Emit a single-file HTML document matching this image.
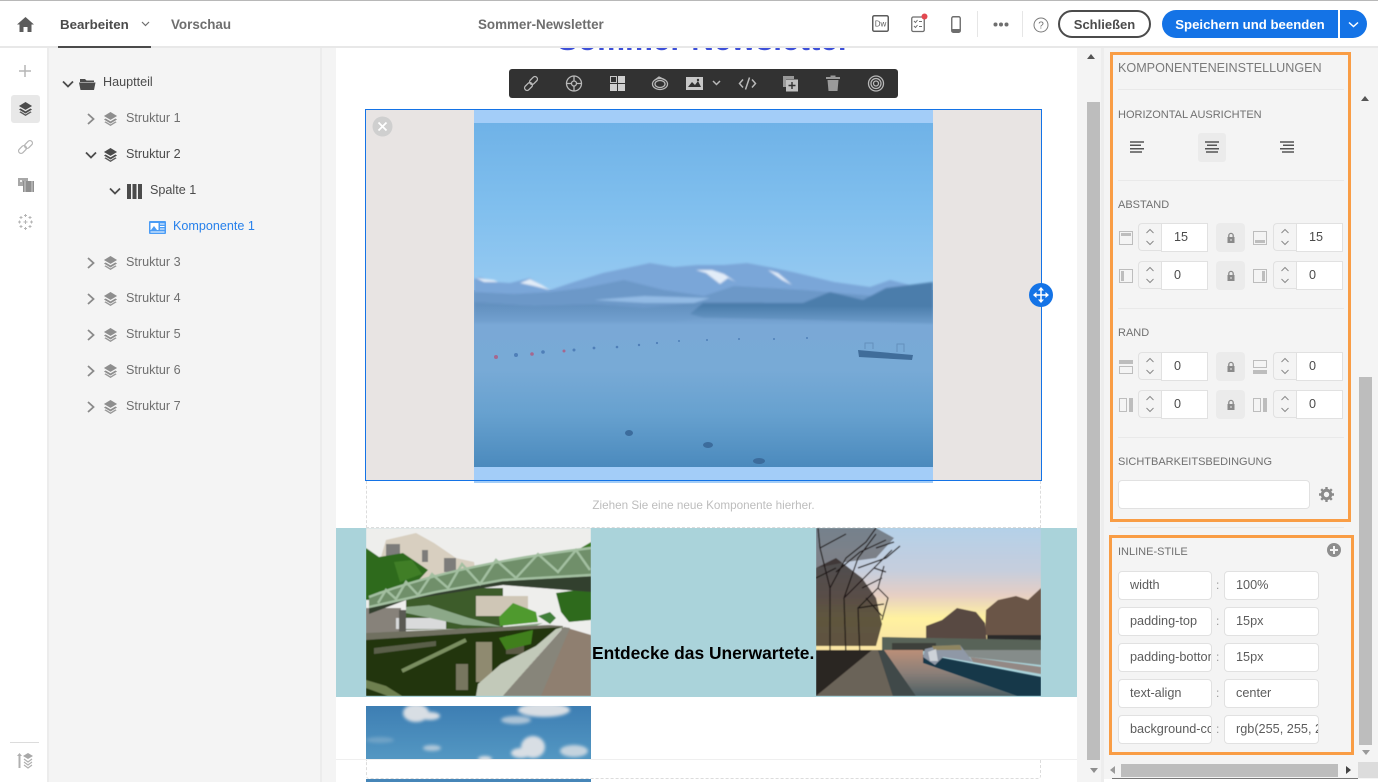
<!DOCTYPE html>
<html lang="de"><head><meta charset="utf-8"><title>Sommer-Newsletter</title>
<style>
*{box-sizing:border-box}
html,body{margin:0;padding:0}
body{width:1378px;height:782px;position:relative;overflow:hidden;background:#f4f4f4;font-family:"Liberation Sans",Arial,sans-serif;color:#6e6e6e}
.a{position:absolute}
.t{position:absolute;white-space:nowrap;line-height:16px}
svg{position:absolute;display:block;overflow:hidden}
.tree{font-size:12.6px;color:#707070}
.lbl{font-size:11px;color:#707070;position:absolute;left:1118px;white-space:nowrap;line-height:14px}
.hr{position:absolute;left:1118px;width:226px;height:1px;background:#e9e9e9}
.step{position:absolute;width:24px;height:28px;border:1px solid #e1e1e1;border-right:0;border-radius:4px 0 0 4px;background:#f4f4f4}
.num{position:absolute;width:47px;height:29px;border:1px solid #e1e1e1;background:#fff;font-size:12.6px;color:#4b4b4b;line-height:27px}
.lock{position:absolute;width:29px;height:29px;border-radius:4px;background:#ebebeb}
.box{position:absolute;height:29px;background:#fff;border:1px solid #e1e1e1;border-radius:4px;font-size:12.7px;color:#5c5c5c;line-height:26px;overflow:hidden;white-space:nowrap}
.colon{position:absolute;left:1216px;font-size:12px;color:#999;line-height:16px}
</style></head><body>
<svg width="0" height="0" style="position:absolute">
<defs>
<symbol id="layers" viewBox="0 0 16 16"><path d="M8 1 15 5.300 8 9.500 1 5.300Z"/><path d="M2.800 8 1 9.100 8 13.300 15 9.100 13.200 8 8 11.100Z"/><path d="M2.800 11 1.500 12 8 16 14.500 12 13.200 11 8 14.200Z" opacity=".9"/></symbol>
<symbol id="cr" viewBox="0 0 10 14"><path d="M2 2 7.500 7 2 12" fill="none" stroke="currentColor" stroke-width="1.800"/></symbol>
<symbol id="cd" viewBox="0 0 14 10"><path d="M2 2.500 7 7.500 12 2.500" fill="none" stroke="currentColor" stroke-width="1.800"/></symbol>
<symbol id="up" viewBox="0 0 10 6"><path d="M1.500 5 5 1.500 8.500 5" fill="none" stroke="#8a8a8a" stroke-width="1"/></symbol>
<symbol id="dn" viewBox="0 0 10 6"><path d="M1.500 1 5 4.500 8.500 1" fill="none" stroke="#8a8a8a" stroke-width="1"/></symbol>
<symbol id="lk" viewBox="0 0 10 12"><path d="M2.800 5V3.600a2.200 2.200 0 0 1 4.400 0V5" fill="none" stroke="#8a8a8a" stroke-width="1.300"/><rect x="1.500" y="5" width="7" height="6" fill="#8a8a8a"/><rect x="4.500" y="7" width="1" height="2" fill="#ebebeb"/></symbol>
</defs></svg>

<!-- canvas -->
<div class="a" style="left:336px;top:48px;width:741px;height:734px;background:#fff;overflow:hidden"></div>
<div class="t" style="left:336px;width:735px;text-align:center;top:20px;height:32px;line-height:40px;overflow:hidden;font-size:31.4px;font-weight:bold;color:#3d4fd8;">Sommer Newsletter</div>

<!-- Selected image component -->
<div class="a" style="left:366px;top:110px;width:675px;height:370px;background:#e8e4e3"></div>
<svg style="left:474px;top:110px" width="459" height="373" viewBox="0 0 459 373">
<defs>
<linearGradient id="sky2" x1="0" y1="0" x2="0" y2="1"><stop offset="0" stop-color="#6fb2e7"/><stop offset=".5" stop-color="#80bfee"/><stop offset="1" stop-color="#97caf1"/></linearGradient>
<linearGradient id="wat" x1="0" y1="0" x2="0" y2="1"><stop offset="0" stop-color="#7aa8d6"/><stop offset=".45" stop-color="#78aad6"/><stop offset=".7" stop-color="#67a1cf"/><stop offset="1" stop-color="#4b8abd"/></linearGradient>
<linearGradient id="haze" x1="0" y1="0" x2="0" y2="1"><stop offset="0" stop-color="#7aa8d6" stop-opacity="0"/><stop offset=".7" stop-color="#7aa8d6"/><stop offset="1" stop-color="#7aa8d6"/></linearGradient>
<filter id="sf"><feGaussianBlur stdDeviation="1"/></filter>
</defs>
<rect width="459" height="373" fill="#a3cdf8"/>
<rect y="13" width="459" height="170" fill="url(#sky2)"/>
<rect y="180" width="459" height="177" fill="url(#wat)"/>
<g filter="url(#sf)">
<path d="M0 169 6 167 20 172 36 173 56 168 76 180 100 172 129 163 176 153 200 157 223 155 250 155 273 153 300 158 323 163 360 172 396 177 416 170 436 175 459 172V214H0Z" fill="#7aa6d8"/>
<path d="M2 168 20 170 24 172 10 172ZM46 173 56 169 68 175 76 180 60 176ZM222 160 232 163 246 174 254 168 262 172 250 164 238 160ZM294 160 308 170 318 175 304 163Z" fill="#e2ecf8"/>
<path d="M0 182 40 184 76 182 110 178 150 170 190 180 230 186 260 176 330 180 400 186 459 180V214H0Z" fill="#6c98c8"/>
<path d="M0 192 60 196 120 194 170 198 230 192 290 192 270 204 200 212 0 212Z" fill="#6491c0"/>
<path d="M120 190 170 186 236 188 220 193 170 193Z" fill="#92bae4"/>
<path d="M216 204 229 193 329 193 356 182 389 190 412 178 459 172V214L400 212 330 210 230 208Z" fill="#4c7dab"/>
</g>
<rect y="196" width="459" height="34" fill="url(#haze)"/>
<g fill="#4f7fb8">
<circle cx="22" cy="247" r="2" fill="#a5688f"/><circle cx="42" cy="245" r="2"/><circle cx="58" cy="244" r="1.800" fill="#a5688f"/><circle cx="69" cy="242" r="1.800"/><circle cx="90" cy="241" r="1.500" fill="#a5688f"/><circle cx="100" cy="240" r="1.500"/><circle cx="120" cy="238" r="1.400"/><circle cx="143" cy="237" r="1.300"/><circle cx="165" cy="235" r="1.200"/><circle cx="183" cy="233" r="1.100"/><circle cx="205" cy="231" r="1"/><circle cx="233" cy="230" r="1"/><circle cx="265" cy="229" r="1"/><circle cx="300" cy="229" r="1"/><circle cx="333" cy="228" r="1"/>
</g>
<path d="M384 240 439 245 438 250 385 247Z" fill="#406d9a"/><path d="M391 239V233H399V239M423 242V234H430V242" fill="none" stroke="#6490bc" stroke-width="1"/>
<g fill="#3c6c9c"><ellipse cx="155" cy="323" rx="4" ry="3"/><ellipse cx="234" cy="335" rx="5" ry="3"/><ellipse cx="285" cy="351" rx="6" ry="3"/></g>
<rect y="0" width="459" height="13" fill="#a3cdf8"/><rect y="357" width="459" height="16" fill="#a3cdf8"/>
</svg>
<div class="a" style="left:365px;top:109px;width:677px;height:372px;border:1px solid #1473e6"></div>
<svg style="left:372px;top:116px" width="21" height="21" viewBox="0 0 21 21"><circle cx="10.500" cy="10.500" r="10" fill="#cfcfcf"/><path d="M6.500 6.500 14.500 14.500M14.500 6.500 6.500 14.500" stroke="#fff" stroke-width="1.800"/></svg>
<svg style="left:1029px;top:283px" width="24" height="24" viewBox="0 0 24 24"><circle cx="12" cy="12" r="12" fill="#1473e6"/><path d="M12 5V19M5 12H19" stroke="#fff" stroke-width="1.500"/><path d="M12 4 15 7.500H9ZM12 20 15 16.500H9ZM4 12 7.500 9V15ZM20 12 16.500 9V15Z" fill="#fff"/></svg>

<!-- toolbar -->
<div class="a" style="left:509px;top:69px;width:389px;height:29px;background:#323232;border-radius:3px"></div>
<svg style="left:509px;top:69px" width="389" height="29" viewBox="0 0 389 29" fill="none" stroke="#b9b9b9" stroke-width="1.300">
<rect x="15" y="15" width="9" height="5" rx="2.500" transform="rotate(-45 19.500 17.500)"/><rect x="20" y="9" width="9" height="5" rx="2.500" transform="rotate(-45 24.500 11.500)"/>
<circle cx="65" cy="14.500" r="7.500"/><circle cx="65" cy="14.500" r="2.500"/><path d="M57.500 14.500H62.500M67.500 14.500H72.500M65 7V12M65 17V22"/>
<g stroke="none"><rect x="101.500" y="7.500" width="6" height="6" fill="none" stroke="#c8c8c8" stroke-width="1"/><rect x="109" y="7" width="7" height="7" fill="#d0d0d0"/><rect x="101" y="15" width="7" height="7" fill="#d0d0d0"/><rect x="109" y="15" width="7" height="7" fill="#d0d0d0"/></g>
<ellipse cx="151" cy="15" rx="7.500" ry="5.500"/><ellipse cx="151" cy="15" rx="5" ry="3.500"/><path d="M146 11 150 8 156 11"/>
<g stroke="none"><rect x="177" y="8" width="17" height="13" fill="#c8c8c8"/><path d="M179 18 183 13 186 16 189 12 192 18Z" fill="#323232"/><circle cx="189" cy="11" r="1.200" fill="#323232"/></g>
<path d="M204 12 207.500 15.500 211 12" stroke-width="1.500"/>
<path d="M234 10.500 230.500 14.500 234 18.500M243 10.500 246.500 14.500 243 18.500M240.500 8.500 236.500 20.500" stroke-width="1.500"/>
<g stroke="none"><path d="M274 7H285V10H277V18H274Z" fill="#999"/><rect x="277" y="10.500" width="12" height="12" fill="#c0c0c0"/></g><path d="M283 13V20M279.500 16.500H286.500" stroke="#323232" stroke-width="1.400"/>
<g stroke="none"><path d="M317 8H331V10H317ZM321.500 6.500H326.500V8H321.500ZM318.500 11H329.500L328.500 22H319.500Z" fill="#9a9a9a"/></g>
<circle cx="367" cy="14.500" r="7.500"/><circle cx="367" cy="14.500" r="5"/><circle cx="367" cy="14.500" r="2.500"/>
</svg>

<!-- drop zone -->
<div class="a" style="left:366px;top:481px;width:675px;height:47px;border:1px dashed #dcdcdc;border-top:0"></div>
<div class="t" style="left:366px;width:675px;top:498px;text-align:center;font-size:11.7px;color:#bdbdbd">Ziehen Sie eine neue Komponente hierher.</div>

<!-- teal row -->
<div class="a" style="left:336px;top:528px;width:741px;height:169px;background:#aad3da"></div>
<div class="t" style="left:592px;top:643px;font-size:17.4px;font-weight:bold;color:#000;line-height:20px">Entdecke das Unerwartete.</div>

<!-- Bridge photo -->
<svg style="left:366px;top:528px" width="225" height="168" viewBox="0 0 225 168">
<defs><filter id="b1"><feGaussianBlur stdDeviation=".6"/></filter></defs>
<g filter="url(#b1)">
<rect width="225" height="168" fill="#eeeeec"/>
<path d="M15 29 20 12 50 5 68 15 90 30 108 34 112 60 60 70 15 72Z" fill="#d8cfc0"/>
<path d="M20 16H34V34H20ZM78 30H90V44H78ZM56 22H62V34H56Z" fill="#7d7b7a"/>
<path d="M0 20 13 29 37 25 62 42 50 55 13 64 3 72H0Z" fill="#2f6b1e"/>
<path d="M28 34 46 32 56 46 34 54Z" fill="#3f7e26"/>
<path d="M40 72 110 60 137 60 137 100 40 102Z" fill="#3e5c2c"/>
<rect x="110" y="68" width="52" height="20" fill="#cfc6b6"/>
<path d="M190 65 225 60V92L203 94 195 84Z" fill="#2e6a1d"/>
<path d="M198 30 225 14V36L205 40Z" fill="#3c7a28"/>
<path d="M133 89 147 75 170 84 172 94 134 98Z" fill="#4f9a2f"/>
<path d="M172 88 184 84 190 90 184 96Z" fill="#3f7f38"/>
<rect x="0" y="80" width="35" height="26" fill="#87827a"/>
<rect x="30" y="90" width="50" height="11" fill="#d9dadb"/>
<path d="M40 79 63 77 103 90 137 99 177 95 165 100 97 97 40 85Z" fill="#8ca888"/>
<rect x="33" y="82" width="7" height="24" fill="#5a5a52"/>
<path d="M0 105 183 97 197 98 197 101 0 114Z" fill="#6f6f60"/>
<path d="M0 112 197 99 137 168H0Z" fill="#23360b"/>
<path d="M8 120 70 113 70 118 8 126Z" fill="#5a5f48"/>
<rect x="110" y="114" width="16" height="40" fill="#8f8a70"/>
<rect x="90" y="136" width="12" height="26" fill="#77765e"/>
<rect x="140" y="108" width="18" height="18" fill="#5b5a45"/>
<path d="M133 110 167 102 165 116 140 122Z" fill="#3f7f1a"/>
<path d="M36 143 100 112" stroke="#7a8e60" stroke-width="4" fill="none"/>
<path d="M0 152 20 158 36 168H22L0 160Z" fill="#6e8050"/>
<path d="M110 168 112 156 135 136 170 118 190 101 197 99 137 168Z" fill="#c2c9b9"/>
<path d="M137 168 198 99 225 107V168Z" fill="#8f7f70"/>
<path d="M137 168 198 99 204 100 175 168Z" fill="#87857a"/>
<path d="M3 79 70 64 137 52 225 47V64L137 57 40 72 3 86Z" fill="#33402e"/>
<path d="M3 69Q90 36 225 20V47L137 52 70 64 3 79Z" fill="#6f8f6a"/>
<g stroke="#a3bfa0" stroke-width="2.400" fill="none"><path d="M12 75 20 62 30 71 40 54 52 67 66 46 82 60 96 36 114 56 130 32 150 50 172 26 192 44 210 22 224 42"/><path d="M3 69Q90 36 225 20"/><path d="M3 79 70 64 137 52 225 47"/></g>
</g>
</svg>

<!-- Sunset photo -->
<svg style="left:816px;top:528px" width="225" height="168" viewBox="0 0 225 168">
<defs><linearGradient id="ss" x1="0" y1="0" x2="0" y2="1"><stop offset="0" stop-color="#b4d0e8"/><stop offset=".35" stop-color="#c6cedd"/><stop offset=".55" stop-color="#e6cfc4"/><stop offset=".74" stop-color="#fff2a0"/><stop offset=".9" stop-color="#fbe6a4"/></linearGradient>
<linearGradient id="sw" x1="0" y1="0" x2="0" y2="1"><stop offset="0" stop-color="#bb8f78"/><stop offset=".5" stop-color="#8b7f78"/><stop offset="1" stop-color="#4d5f63"/></linearGradient>
<filter id="b2"><feGaussianBlur stdDeviation=".5"/></filter></defs>
<g filter="url(#b2)">
<rect width="225" height="122" fill="url(#ss)"/>
<path d="M169 107 170 82 182 72 200 68 212 72 225 60V110Z" fill="#6b5447"/>
<path d="M126 92 141 80 160 84 169 95 171 116H110V98Z" fill="#584a42"/>
<rect x="171" y="107" width="54" height="13" fill="#2a2a2c"/>
<path d="M0 40 20 30 46 50 60 70 66 96 60 118H0Z" fill="#2a211d" opacity=".75"/>
<path d="M0 0H60L78 10 60 30 30 34 0 40Z" fill="#2a211d" opacity=".45"/>
<g stroke="#1d1613" stroke-width="1.200" fill="none"><path d="M14 130 14 60 4 20 2 0M30 130 28 70 42 30 60 6M14 60 30 30 50 14 60 0M28 70 58 40 76 22M44 130 42 80 62 60 68 38M42 80 68 76M60 20 78 14M42 40 70 30 84 18M4 20 30 6M20 44 44 24 70 12M46 60 66 50M58 40 70 44M0 50 20 40M62 60 72 70 66 92M50 70 66 88"/></g>
<path d="M66 109 225 112V122H66Z" fill="#596459"/>
<rect x="76" y="115" width="44" height="8" fill="#3c3f3a"/>
<path d="M0 122H62L66 122 100 168H0Z" fill="#2c2622"/>
<path d="M66 122 107 122 107 135 201 168H100Z" fill="url(#sw)"/>
<path d="M107 122H225V137L154 129Z" fill="#7c7a76" opacity=".8"/>
<path d="M0 168 56 122 62 122 77 168Z" fill="#6b6358"/>
<path d="M62 122 68 122 100 168H77Z" fill="#40494a"/>
<path d="M107 127 127 130 225 149V168H201L107 135Z" fill="#15374a"/>
<path d="M154 129 225 139V146L157 134Z" fill="#938884"/>
<path d="M109 121 122 118 144 117 157 134 127 129 119 137 107 129Z" fill="#8f98a6"/>
<path d="M116 118 144 117 146 122 118 122Z" fill="#8f8560"/>
<path d="M112 124 120 121 122 133 114 133Z" fill="#cdd2d8"/>
</g>
</svg>

<!-- Sky photo -->
<svg style="left:366px;top:706px" width="225" height="76" viewBox="0 0 225 76">
<defs><linearGradient id="bs" x1="0" y1="0" x2="0" y2="1"><stop offset="0" stop-color="#3d7eb3"/><stop offset="1" stop-color="#5da2c9"/></linearGradient><filter id="bl"><feGaussianBlur stdDeviation="1.500"/></filter></defs>
<rect width="225" height="76" fill="url(#bs)"/>
<g fill="#d8dee4" filter="url(#bl)"><ellipse cx="50" cy="7" rx="13" ry="9"/><ellipse cx="64" cy="10" rx="10" ry="4"/><ellipse cx="178" cy="4" rx="26" ry="7"/><ellipse cx="150" cy="14" rx="15" ry="4" opacity=".7"/><ellipse cx="167" cy="41" rx="12" ry="11"/><ellipse cx="155" cy="47" rx="10" ry="5"/><ellipse cx="208" cy="45" rx="14" ry="6" opacity=".85"/><ellipse cx="66" cy="42" rx="9" ry="3" opacity=".7"/><ellipse cx="119" cy="53" rx="7" ry="3"/><ellipse cx="14" cy="34" rx="14" ry="3" opacity=".25"/></g>
</svg>
<div class="a" style="left:336px;top:759px;width:741px;height:23px;background:#fff;border-top:1px solid #efefef"></div>
<div class="a" style="left:366px;top:760px;width:675px;height:19px;border:1px dashed #dcdcdc;border-top:0;border-radius:0 0 3px 3px"></div>
<div class="a" style="left:366px;top:779px;width:225px;height:3px;background:#4686b8"></div>

<!-- canvas scrollbar -->
<div class="a" style="left:1077px;top:48px;width:27px;height:734px;background:#f4f4f4"></div>
<div class="a" style="left:1101px;top:48px;width:3px;height:734px;background:#ededed"></div>
<div class="a" style="left:1087px;top:102px;width:13px;height:658px;background:#bdbdbd"></div>
<svg style="left:1087px;top:54px" width="8" height="5"><path d="M0 5 4 0 8 5Z" fill="#555"/></svg>
<svg style="left:1090px;top:768px" width="8" height="5"><path d="M0 0H8L4 5Z" fill="#8e8e8e"/></svg>

<!-- left tree panel -->
<div class="a" style="left:0;top:48px;width:47px;height:734px;background:#fff"></div>
<div class="a" style="left:47px;top:48px;width:2px;height:734px;background:#ececec"></div>
<div class="a" style="left:320px;top:48px;width:2px;height:734px;background:#ececec"></div>

<div class="a" style="left:11px;top:95px;width:29px;height:28px;background:#e8e8e8;border-radius:3px"></div>
<svg style="left:18px;top:64px" width="14" height="14" viewBox="0 0 14 14"><path d="M7 1V13M1 7H13" stroke="#b5b5b5" stroke-width="1.500"/></svg>
<svg style="left:18px;top:101px;color:#4b4b4b" width="15" height="15" fill="#4b4b4b"><use href="#layers"/></svg>
<svg style="left:17px;top:139px" width="17" height="16" viewBox="0 0 17 16" fill="none" stroke="#b5b5b5" stroke-width="1.200"><rect x="1" y="8" width="9" height="5" rx="2.500" transform="rotate(-45 5.500 10.500)"/><rect x="7" y="3" width="9" height="5" rx="2.500" transform="rotate(-45 11.500 5.500)"/></svg>
<svg style="left:18px;top:177px" width="16" height="16" viewBox="0 0 16 16"><rect x="0" y="1" width="10" height="8" fill="#a8a8a8"/><rect x="5" y="4" width="11" height="11" fill="#8f8f8f"/><path d="M7 4V15M14 4V15" stroke="#d0d0d0"/><rect x="2" y="3" width="2" height="2" fill="#eee"/></svg>
<svg style="left:17px;top:214px" width="17" height="16" viewBox="0 0 17 16" fill="none" stroke="#b5b5b5" stroke-width="1"><path d="M8.500 0V3M7 1.500H10M8.500 6V10M6.500 8H10.500M8.500 13V16M7 14.500H10M1 8H4M2.500 6.500V9.500M13 8H16M14.500 6.500V9.500M4 2V5M2.500 3.500H5.500M13 2V5M11.500 3.500H14.500M4 11V14M2.500 12.500H5.500M13 11V14M11.500 12.500H14.500"/></svg>
<div class="a" style="left:10px;top:742px;width:29px;height:1px;background:#dcdcdc"></div>
<svg style="left:17px;top:753px" width="17" height="16" viewBox="0 0 17 16"><path d="M2.500 2V15" stroke="#b0b0b0" stroke-width="2"/><path d="M0 3 2.500 0 5 3Z" fill="#b0b0b0"/><path d="M11 0 16 3 11 6 6 3Z" fill="#a8a8a8"/><path d="M7 6 11 9 15 6M7 9 11 12 15 9M7 12 11 15 15 12" stroke="#b0b0b0" fill="none" stroke-width="1.200"/></svg>

<!-- tree -->
<svg style="left:61px;top:79px;color:#4b4b4b" width="14" height="10"><use href="#cd"/></svg>
<svg style="left:79px;top:77px" width="17" height="13" viewBox="0 0 17 13"><path d="M1 2H6L7.500 3.500H15V5H1Z" fill="#4b4b4b"/><path d="M0 5.500H16.500L15 13H1.500Z" fill="#4b4b4b"/></svg>
<div class="t" style="left:103px;top:74px;font-size:12.6px;color:#4b4b4b">Hauptteil</div>

<svg style="left:86px;top:112px;color:#8a8a8a" width="10" height="14"><use href="#cr"/></svg>
<svg style="left:103px;top:111px" width="15" height="15" fill="#8e8e8e"><use href="#layers"/></svg>
<div class="t tree" style="left:126px;top:110px">Struktur 1</div>

<svg style="left:84px;top:150px;color:#4b4b4b" width="14" height="10"><use href="#cd"/></svg>
<svg style="left:103px;top:147px" width="15" height="15" fill="#4b4b4b"><use href="#layers"/></svg>
<div class="t" style="left:126px;top:146px;font-size:12.6px;color:#4b4b4b">Struktur 2</div>

<svg style="left:108px;top:186px;color:#4b4b4b" width="14" height="10"><use href="#cd"/></svg>
<svg style="left:127px;top:184px" width="15" height="15" viewBox="0 0 15 15" fill="#4b4b4b"><rect width="4" height="15"/><rect x="5.500" width="4" height="15"/><rect x="11" width="4" height="15"/></svg>
<div class="t" style="left:150px;top:182px;font-size:12.6px;color:#4b4b4b">Spalte 1</div>

<svg style="left:149px;top:221px" width="17" height="13" viewBox="0 0 17 13"><rect width="17" height="13" rx="1" fill="#4b9cf5"/><rect x="1.500" y="2" width="8" height="7" fill="#fff"/><path d="M2 9 5 5 8 9Z" fill="#4b9cf5"/><path d="M11 3H15.500M11 5.500H15.500M11 8H15.500M1.500 11H15.500" stroke="#fff"/></svg>
<div class="t" style="left:173px;top:218px;font-size:12.6px;color:#2680eb">Komponente 1</div>

<svg style="left:86px;top:256px;color:#8a8a8a" width="10" height="14"><use href="#cr"/></svg>
<svg style="left:103px;top:255px" width="15" height="15" fill="#8e8e8e"><use href="#layers"/></svg>
<div class="t tree" style="left:126px;top:254px">Struktur 3</div>
<svg style="left:86px;top:292px;color:#8a8a8a" width="10" height="14"><use href="#cr"/></svg>
<svg style="left:103px;top:291px" width="15" height="15" fill="#8e8e8e"><use href="#layers"/></svg>
<div class="t tree" style="left:126px;top:290px">Struktur 4</div>
<svg style="left:86px;top:328px;color:#8a8a8a" width="10" height="14"><use href="#cr"/></svg>
<svg style="left:103px;top:327px" width="15" height="15" fill="#8e8e8e"><use href="#layers"/></svg>
<div class="t tree" style="left:126px;top:326px">Struktur 5</div>
<svg style="left:86px;top:364px;color:#8a8a8a" width="10" height="14"><use href="#cr"/></svg>
<svg style="left:103px;top:363px" width="15" height="15" fill="#8e8e8e"><use href="#layers"/></svg>
<div class="t tree" style="left:126px;top:362px">Struktur 6</div>
<svg style="left:86px;top:400px;color:#8a8a8a" width="10" height="14"><use href="#cr"/></svg>
<svg style="left:103px;top:399px" width="15" height="15" fill="#8e8e8e"><use href="#layers"/></svg>
<div class="t tree" style="left:126px;top:398px">Struktur 7</div>

<!-- top bar -->
<div class="a" style="left:0;top:0;width:1378px;height:46px;background:#fff;border-top:1px solid #b8b8b8"></div>
<div class="a" style="left:0;top:46px;width:1378px;height:2px;background:#e8e8e8"></div>
<svg style="left:17px;top:17px" width="17" height="15" viewBox="0 0 17 15"><path d="M8.500 0 17 7.500H14.500V15H10.500V10H6.500V15H2.500V7.500H0Z" fill="#5c5c5c"/></svg>
<div class="t" style="left:60px;top:17px;font-size:13.3px;font-weight:bold;color:#4b4b4b">Bearbeiten</div>
<svg style="left:141px;top:21px" width="9" height="6" viewBox="0 0 9 6"><path d="M1 1 4.500 4.500 8 1" fill="none" stroke="#6e6e6e" stroke-width="1.200"/></svg>
<div class="a" style="left:58px;top:46px;width:93px;height:2px;background:#4b4b4b"></div>
<div class="t" style="left:171px;top:17px;font-size:13.4px;font-weight:bold;color:#6e6e6e">Vorschau</div>
<div class="t" style="left:478px;top:17px;font-size:13.4px;font-weight:bold;color:#6e6e6e">Sommer-Newsletter</div>

<svg style="left:872px;top:15px" width="17" height="17" viewBox="0 0 17 17"><rect x=".75" y=".75" width="15.500" height="15.500" rx="1.500" fill="none" stroke="#5c5c5c" stroke-width="1.500"/><text x="8.500" y="11.500" font-size="8" text-anchor="middle" fill="#5c5c5c" font-family="Liberation Sans, sans-serif">Dw</text></svg>
<svg style="left:910px;top:13px" width="20" height="20" viewBox="0 0 20 20"><rect x="1.750" y="4" width="12.500" height="14.500" rx="1.500" fill="none" stroke="#6e6e6e" stroke-width="1.300"/><path d="M4 8 5.500 9.500 7.500 7M9 8.500H12M4 13 5.500 14.500 7.500 12M9 13.500H12" fill="none" stroke="#6e6e6e"/><circle cx="14.500" cy="3.500" r="3" fill="#e34850"/></svg>
<svg style="left:951px;top:16px" width="10" height="17" viewBox="0 0 10 17"><rect x=".75" y=".75" width="8.500" height="15.500" rx="1.500" fill="none" stroke="#6e6e6e" stroke-width="1.400"/><rect x="1" y="13" width="8" height="3" fill="#6e6e6e"/></svg>
<div class="a" style="left:977px;top:11px;width:1px;height:26px;background:#e6e6e6"></div>
<svg style="left:993px;top:22px" width="16" height="5"><circle cx="2.500" cy="2.500" r="2" fill="#6e6e6e"/><circle cx="8" cy="2.500" r="2" fill="#6e6e6e"/><circle cx="13.500" cy="2.500" r="2" fill="#6e6e6e"/></svg>
<div class="a" style="left:1022px;top:11px;width:1px;height:26px;background:#e6e6e6"></div>
<svg style="left:1033px;top:17px" width="16" height="16" viewBox="0 0 16 16"><circle cx="8" cy="8" r="7" fill="none" stroke="#7a7a7a"/><text x="8" y="11.500" font-size="10" text-anchor="middle" fill="#6e6e6e" font-family="Liberation Sans, sans-serif">?</text></svg>
<div class="a" style="left:1058px;top:10px;width:93px;height:28px;border:2px solid #4b4b4b;border-radius:14px;background:#fff;text-align:center;font-size:13px;font-weight:bold;color:#4b4b4b;line-height:25px">Schließen</div>
<div class="a" style="left:1162px;top:10px;width:176px;height:28px;background:#1473e6;border-radius:14px 0 0 14px;text-align:center;font-size:13.2px;font-weight:bold;color:#fff;line-height:29px">Speichern und beenden</div>
<div class="a" style="left:1340px;top:10px;width:27px;height:28px;background:#1473e6;border-radius:0 14px 14px 0"></div>
<svg style="left:1348px;top:21px" width="11" height="7" viewBox="0 0 11 7"><path d="M1 1.500 5.500 5.500 10 1.500" fill="none" stroke="#fff" stroke-width="1.500"/></svg>

<!-- right panel -->
<div class="a" style="left:1104px;top:48px;width:274px;height:734px;background:#f4f4f4"></div>
<div class="t" style="left:1118px;top:60px;font-size:12.6px;color:#7a7a7a">KOMPONENTENEINSTELLUNGEN</div>
<div class="hr" style="top:89px"></div>
<div class="lbl" style="top:108px">HORIZONTAL AUSRICHTEN</div>
<div class="a" style="left:1198px;top:133px;width:28px;height:29px;background:#ebebeb;border-radius:3px"></div>
<svg style="left:1130px;top:141px" width="14" height="12" viewBox="0 0 14 12" stroke="#555" stroke-width="1.500"><path d="M0 1H14M0 4.300H11M0 7.700H14M0 11H12"/></svg>
<svg style="left:1205px;top:141px" width="14" height="12" viewBox="0 0 14 12" stroke="#555" stroke-width="1.500"><path d="M0 1H14M2 4.300H12M0 7.700H14M1 11H13"/></svg>
<svg style="left:1280px;top:141px" width="14" height="12" viewBox="0 0 14 12" stroke="#555" stroke-width="1.500"><path d="M0 1H14M3 4.300H14M0 7.700H14M2 11H14"/></svg>
<div class="hr" style="top:180px"></div>
<div class="lbl" style="top:198px">ABSTAND</div>

<!-- Abstand rows -->
<svg style="left:1119px;top:231px" width="14" height="14" viewBox="0 0 14 14"><rect x=".5" y=".5" width="13" height="13" fill="none" stroke="#bdbdbd"/><rect x="2" y="2" width="10" height="3" fill="#bdbdbd"/></svg>
<div class="step" style="left:1138px;top:223px"></div><svg style="left:1145px;top:228px" width="10" height="6"><use href="#up"/></svg><svg style="left:1145px;top:240px" width="10" height="6"><use href="#dn"/></svg>
<div class="num" style="left:1161px;top:223px;padding-left:12px">15</div>
<div class="lock" style="left:1216px;top:223px"></div><svg style="left:1226px;top:232px" width="10" height="12"><use href="#lk"/></svg>
<svg style="left:1253px;top:231px" width="14" height="14" viewBox="0 0 14 14"><rect x=".5" y=".5" width="13" height="13" fill="none" stroke="#bdbdbd"/><rect x="2" y="9" width="10" height="3" fill="#bdbdbd"/></svg>
<div class="step" style="left:1273px;top:223px"></div><svg style="left:1280px;top:228px" width="10" height="6"><use href="#up"/></svg><svg style="left:1280px;top:240px" width="10" height="6"><use href="#dn"/></svg>
<div class="num" style="left:1296px;top:223px;padding-left:12px">15</div>

<svg style="left:1119px;top:269px" width="14" height="14" viewBox="0 0 14 14"><rect x=".5" y=".5" width="13" height="13" fill="none" stroke="#bdbdbd"/><rect x="2" y="2" width="3" height="10" fill="#bdbdbd"/></svg>
<div class="step" style="left:1138px;top:261px"></div><svg style="left:1145px;top:266px" width="10" height="6"><use href="#up"/></svg><svg style="left:1145px;top:278px" width="10" height="6"><use href="#dn"/></svg>
<div class="num" style="left:1161px;top:261px;padding-left:12px">0</div>
<div class="lock" style="left:1216px;top:261px"></div><svg style="left:1226px;top:270px" width="10" height="12"><use href="#lk"/></svg>
<svg style="left:1253px;top:269px" width="14" height="14" viewBox="0 0 14 14"><rect x=".5" y=".5" width="13" height="13" fill="none" stroke="#bdbdbd"/><rect x="9" y="2" width="3" height="10" fill="#bdbdbd"/></svg>
<div class="step" style="left:1273px;top:261px"></div><svg style="left:1280px;top:266px" width="10" height="6"><use href="#up"/></svg><svg style="left:1280px;top:278px" width="10" height="6"><use href="#dn"/></svg>
<div class="num" style="left:1296px;top:261px;padding-left:12px">0</div>

<div class="hr" style="top:308px"></div>
<div class="lbl" style="top:326px">RAND</div>

<!-- Rand rows -->
<svg style="left:1119px;top:360px" width="14" height="14" viewBox="0 0 14 14"><rect y="0" width="14" height="4" fill="#bdbdbd"/><rect x=".5" y="6.500" width="13" height="7" fill="none" stroke="#bdbdbd"/></svg>
<div class="step" style="left:1138px;top:352px"></div><svg style="left:1145px;top:357px" width="10" height="6"><use href="#up"/></svg><svg style="left:1145px;top:369px" width="10" height="6"><use href="#dn"/></svg>
<div class="num" style="left:1161px;top:352px;padding-left:12px">0</div>
<div class="lock" style="left:1216px;top:352px"></div><svg style="left:1226px;top:361px" width="10" height="12"><use href="#lk"/></svg>
<svg style="left:1253px;top:360px" width="14" height="14" viewBox="0 0 14 14"><rect x=".5" y=".5" width="13" height="7" fill="none" stroke="#bdbdbd"/><rect y="10" width="14" height="4" fill="#bdbdbd"/></svg>
<div class="step" style="left:1273px;top:352px"></div><svg style="left:1280px;top:357px" width="10" height="6"><use href="#up"/></svg><svg style="left:1280px;top:369px" width="10" height="6"><use href="#dn"/></svg>
<div class="num" style="left:1296px;top:352px;padding-left:12px">0</div>

<svg style="left:1119px;top:398px" width="14" height="14" viewBox="0 0 14 14"><rect x=".5" y=".5" width="7" height="13" fill="none" stroke="#bdbdbd"/><rect x="10" width="4" height="14" fill="#bdbdbd"/></svg>
<div class="step" style="left:1138px;top:390px"></div><svg style="left:1145px;top:395px" width="10" height="6"><use href="#up"/></svg><svg style="left:1145px;top:407px" width="10" height="6"><use href="#dn"/></svg>
<div class="num" style="left:1161px;top:390px;padding-left:12px">0</div>
<div class="lock" style="left:1216px;top:390px"></div><svg style="left:1226px;top:399px" width="10" height="12"><use href="#lk"/></svg>
<svg style="left:1253px;top:398px" width="14" height="14" viewBox="0 0 14 14"><rect x=".5" y=".5" width="7" height="13" fill="none" stroke="#bdbdbd"/><rect x="10" width="4" height="14" fill="#bdbdbd"/></svg>
<div class="step" style="left:1273px;top:390px"></div><svg style="left:1280px;top:395px" width="10" height="6"><use href="#up"/></svg><svg style="left:1280px;top:407px" width="10" height="6"><use href="#dn"/></svg>
<div class="num" style="left:1296px;top:390px;padding-left:12px">0</div>

<div class="hr" style="top:437px"></div>
<div class="lbl" style="top:455px">SICHTBARKEITSBEDINGUNG</div>
<div class="box" style="left:1118px;top:480px;width:192px"></div>
<svg style="left:1319px;top:487px" width="15" height="15" viewBox="0 0 15 15"><circle cx="7.500" cy="7.500" r="4.200" fill="none" stroke="#8a8a8a" stroke-width="3"/><path d="M7.500 0V15M0 7.500H15M2.200 2.200 12.800 12.800M12.800 2.200 2.200 12.800" stroke="#8a8a8a" stroke-width="2.400" stroke-dasharray="2.600 9.800 2.600"/></svg>

<div class="hr" style="top:527px"></div>
<div class="lbl" style="top:545px">INLINE-STILE</div>
<svg style="left:1327px;top:543px" width="14" height="14" viewBox="0 0 14 14"><circle cx="7" cy="7" r="7" fill="#8e8e8e"/><path d="M7 3V11M3 7H11" stroke="#f4f4f4" stroke-width="2"/></svg>

<div class="box" style="left:1118px;top:571px;width:94px;padding-left:11px">width</div><div class="colon" style="top:577px">:</div><div class="box" style="left:1224px;top:571px;width:95px;padding-left:11px">100%</div>
<div class="box" style="left:1118px;top:607px;width:94px;padding-left:11px">padding-top</div><div class="colon" style="top:613px">:</div><div class="box" style="left:1224px;top:607px;width:95px;padding-left:11px">15px</div>
<div class="box" style="left:1118px;top:643px;width:94px;padding-left:11px">padding-bottom</div><div class="colon" style="top:649px">:</div><div class="box" style="left:1224px;top:643px;width:95px;padding-left:11px">15px</div>
<div class="box" style="left:1118px;top:679px;width:94px;padding-left:11px">text-align</div><div class="colon" style="top:685px">:</div><div class="box" style="left:1224px;top:679px;width:95px;padding-left:11px">center</div>
<div class="box" style="left:1118px;top:715px;width:94px;padding-left:11px">background-color</div><div class="colon" style="top:721px">:</div><div class="box" style="left:1224px;top:715px;width:95px;padding-left:11px">rgb(255, 255, 255)</div>

<!-- orange highlight boxes -->
<div class="a" style="left:1110px;top:52px;width:241px;height:470px;border:3px solid #f99d45"></div>
<div class="a" style="left:1109px;top:535px;width:245px;height:220px;border:3px solid #f99d45"></div>

<!-- panel scrollbars -->
<div class="a" style="left:1359px;top:377px;width:13px;height:368px;background:#bdbdbd"></div>
<svg style="left:1361px;top:96px" width="8" height="5"><path d="M0 5 4 0 8 5Z" fill="#555"/></svg>
<svg style="left:1362px;top:750px" width="8" height="5"><path d="M0 0H8L4 5Z" fill="#9a9a9a"/></svg>
<div class="a" style="left:1121px;top:764px;width:217px;height:13px;background:#bdbdbd"></div>
<svg style="left:1110px;top:766px" width="5" height="8"><path d="M5 0V8L0 4Z" fill="#9a9a9a"/></svg>
<svg style="left:1346px;top:766px" width="5" height="8"><path d="M0 0V8L5 4Z" fill="#444"/></svg>
<div class="a" style="left:1358px;top:762px;width:20px;height:16px;background:#dcdcdc"></div>
<div class="a" style="left:1112px;top:778px;width:246px;height:1px;background:#777"></div>
<div class="a" style="left:1104px;top:779px;width:274px;height:3px;background:#fff"></div>
</body></html>
